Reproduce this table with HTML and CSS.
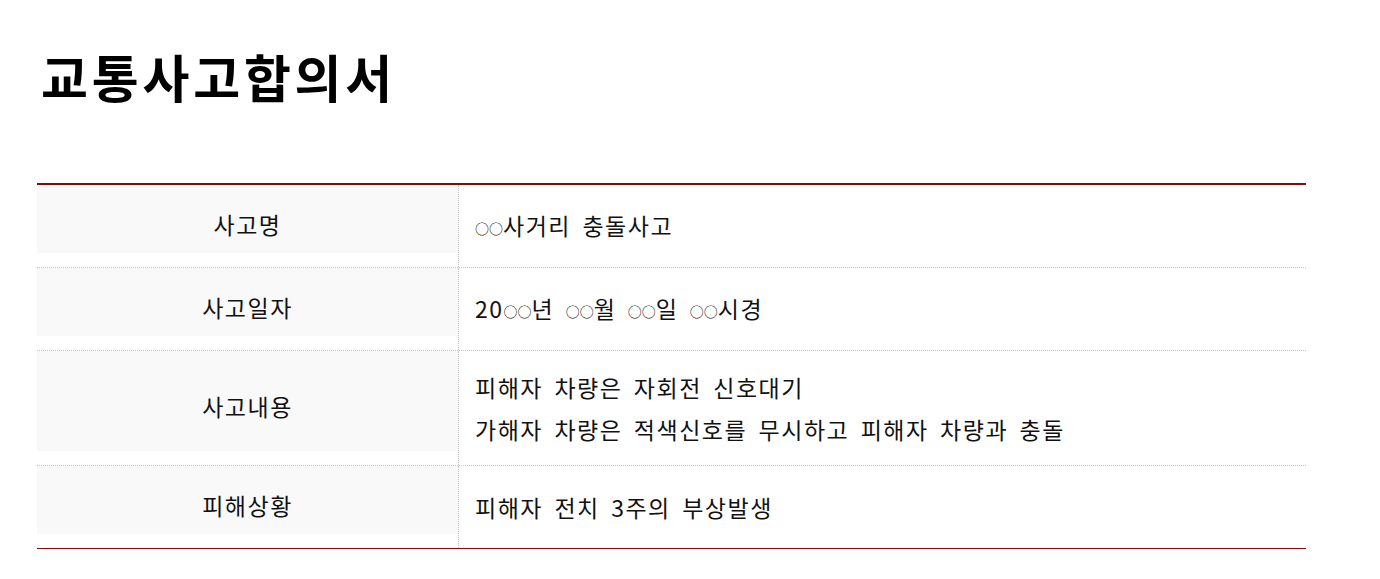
FILE: index.html
```html
<!DOCTYPE html>
<html lang="ko">
<head>
<meta charset="utf-8">
<link rel="stylesheet" href="styles.css">
</head>
<body>
<div class="page">
  <h1 class="title">교통사고합의서</h1>
  <div class="table">
    <div class="row">
      <div class="th"><div class="th-in">사고명</div></div>
      <div class="td"><p><span class="o">○○</span>사거리 충돌사고</p></div>
    </div>
    <div class="row">
      <div class="th"><div class="th-in">사고일자</div></div>
      <div class="td"><p>20<span class="o">○○</span>년 <span class="o">○○</span>월 <span class="o">○○</span>일 <span class="o">○○</span>시경</p></div>
    </div>
    <div class="row tall">
      <div class="th"><div class="th-in">사고내용</div></div>
      <div class="td"><p>피해자 차량은 자회전 신호대기</p><p>가해자 차량은 적색신호를 무시하고 피해자 차량과 충돌</p></div>
    </div>
    <div class="row last">
      <div class="th"><div class="th-in">피해상황</div></div>
      <div class="td"><p>피해자 전치 3주의 부상발생</p></div>
    </div>
  </div>
</div>
</body>
</html>
```

FILE: styles.css
```css
html, body { margin: 0; padding: 0; background: #fff; }
body {
  font-family: "Noto Sans CJK KR", "Noto Sans", sans-serif;
  color: #111;
}
.page { padding: 0 74px 0 37px; }
.title {
  margin: 0;
  padding: 40px 0 0 4px;
  font-size: 51px;
  font-weight: 700;
  letter-spacing: 3.8px;
  line-height: 72px;
  color: #000;
}
.table {
  margin-top: 71px;
  border-top: 2px solid #800c0c;
  border-bottom: 1px solid #800c0c;
  width: 1269px;
}
.row {
  display: grid;
  grid-template-columns: 422px 1fr;
  border-bottom: 1px dotted #c4c4c4;
  height: 83px;
  box-sizing: border-box;
}
.row.tall { height: 115px; }
.row.last { border-bottom: none; height: 82px; }
.th {
  border-right: 1px dotted #c4c4c4;
  padding-bottom: 14px;
  display: flex;
}
.th-in {
  flex: 1;
  background: #f9f9f9;
  display: flex;
  align-items: center;
  justify-content: center;
  font-size: 23px;
  letter-spacing: 1.5px;
  padding-top: 10px;
}
.td {
  display: flex;
  flex-direction: column;
  justify-content: center;
  padding-left: 16px;
  font-size: 23px;
  letter-spacing: 1.5px;
  word-spacing: 3.5px;
}
.td p { margin: 0; line-height: 42px; }
.o {
  font-size: 14px;
  letter-spacing: 0;
  vertical-align: 1px;
}
```
